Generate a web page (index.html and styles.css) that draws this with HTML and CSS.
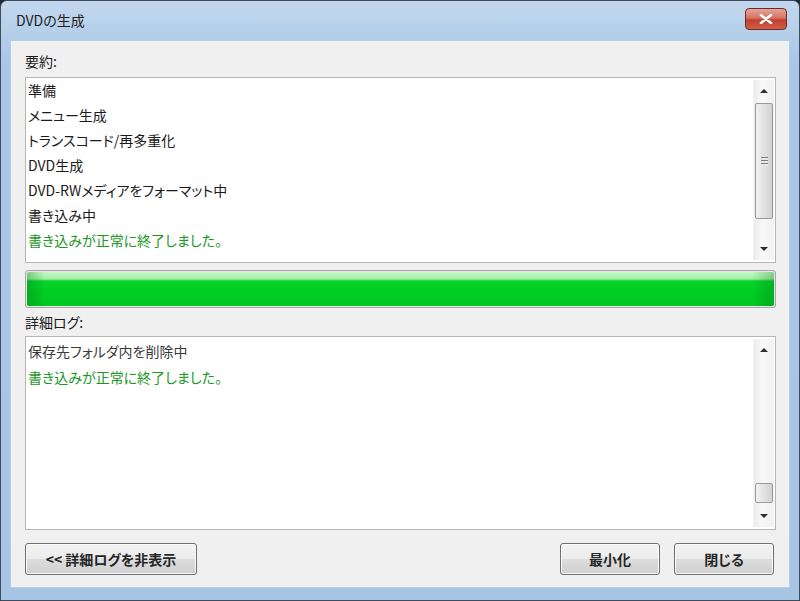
FILE: index.html
```html
<!DOCTYPE html>
<html lang="ja">
<head>
    <meta charset="UTF-8">
    <meta name="viewport" content="width=device-width, initial-scale=1.0">
    <title>DVDの生成</title>
    <link rel="stylesheet" href="styles.css">
</head>
<body>
    <div class="window">
        <div class="titlebar">
            <span class="title">DVDの生成</span>
            <button class="close" aria-label="閉じる">
                <svg width="14" height="10" viewBox="0 0 14 10">
                    <path d="M2 1 L12 9 M12 1 L2 9" stroke="#fff" stroke-width="2.6" stroke-linecap="round"/>
                </svg>
            </button>
        </div>
        <div class="client">
            <div class="label">要約:</div>
            <div class="listbox summary">
                <ul class="items">
                    <li>準備</li>
                    <li>メニュー生成</li>
                    <li>トランスコード/再多重化</li>
                    <li>DVD生成</li>
                    <li>DVD-RWメディアをフォーマット中</li>
                    <li>書き込み中</li>
                    <li class="ok">書き込みが正常に終了しました。</li>
                </ul>
                <div class="scrollbar">
                    <span class="arrow up"></span>
                    <div class="track">
                        <div class="thumb big"><span class="grip"></span></div>
                    </div>
                    <span class="arrow down"></span>
                </div>
            </div>

            <div class="progress">
                <div class="fill"></div>
            </div>

            <div class="label second">詳細ログ:</div>
            <div class="listbox detail">
                <ul class="items log">
                    <li class="muted">保存先フォルダ内を削除中</li>
                    <li class="ok">書き込みが正常に終了しました。</li>
                </ul>
                <div class="scrollbar">
                    <span class="arrow up"></span>
                    <div class="track end">
                        <div class="thumb small"></div>
                    </div>
                    <span class="arrow down"></span>
                </div>
            </div>

            <div class="buttons">
                <button class="btn wide">&lt;&lt; 詳細ログを非表示</button>
                <div class="spacer"></div>
                <button class="btn">最小化</button>
                <button class="btn">閉じる</button>
            </div>
        </div>
    </div>
</body>
</html>
```

FILE: styles.css
```css
body {
    margin: 0;
    padding: 0;
    background-color: #1d2a33;
    font-family: "Noto Sans CJK JP", "Noto Sans", sans-serif;
    font-feature-settings: "palt";
    color: #1a1a1a;
}
.window {
    box-sizing: border-box;
    width: 800px;
    height: 601px;
    border: 1px solid #3d4d5c;
    border-radius: 7px 7px 0 0;
    background: linear-gradient(#c3d8ee, #a9c7e6 60px, #a6c5e4);
    display: flex;
    flex-direction: column;
    padding: 0 9px 12px 9px;
}
.titlebar {
    height: 39px;
    display: flex;
    align-items: center;
    padding-left: 6px;
}
.title {
    font-size: 14px;
    color: #1e1e1e;
    margin-top: -1px;
}
.close {
    margin-left: auto;
    margin-right: 3px;
    margin-top: -3px;
    width: 42px;
    height: 22px;
    border: 1px solid #6b2c2a;
    border-radius: 4px;
    background: linear-gradient(#e6a497, #d67362 45%, #c2402c 55%, #d0604a);
    display: flex;
    align-items: center;
    justify-content: center;
    padding: 0;
}
.client {
    flex: 1;
    box-sizing: border-box;
    background-color: #f0f0f0;
    border: 1px solid #b9cde2;
    padding: 10px 13px 0 14px;
    display: flex;
    flex-direction: column;
}
.label {
    font-size: 14px;
    line-height: 20px;
    height: 20px;
    color: #1a1a1a;
    margin-bottom: 6px;
}
.label.second {
    margin-bottom: 4px;
}
.listbox {
    box-sizing: border-box;
    background-color: #fff;
    border: 1px solid #b5b5b5;
    display: flex;
    position: relative;
}
.summary {
    height: 186px;
    margin-bottom: 7px;
}
.detail {
    height: 194px;
    margin-bottom: 13px;
}
.items {
    list-style: none;
    margin: 0;
    padding: 0 0 0 2px;
    flex: 1;
    font-size: 14px;
    line-height: 25px;
}
.items.log {
    padding-top: 1px;
    line-height: 26px;
}
.ok {
    color: #20981f;
}
.muted {
    color: #3a3a3a;
}
.scrollbar {
    width: 20px;
    margin: 2px 1px 2px 0;
    background: linear-gradient(90deg, #ececec, #f8f8f8 40%, #f1f1f1);
    border-left: 1px solid #f4f4f4;
    display: flex;
    flex-direction: column;
}
.arrow {
    height: 22px;
    display: flex;
    align-items: center;
    justify-content: center;
}
.arrow::before {
    content: "";
    border-left: 4px solid transparent;
    border-right: 4px solid transparent;
}
.arrow.up::before {
    border-bottom: 4px solid #2e2e2e;
}
.arrow.down::before {
    border-top: 4px solid #2e2e2e;
}
.track {
    flex: 1;
    display: flex;
    flex-direction: column;
}
.track.end {
    justify-content: flex-end;
}
.thumb {
    box-sizing: border-box;
    margin: 0 1px;
    border: 1px solid #9a9a9a;
    border-radius: 2px;
    background: linear-gradient(90deg, #f1f1f1, #e2e2e2 50%, #d2d2d2);
    display: flex;
    align-items: center;
    justify-content: center;
}
.thumb.big {
    height: 116px;
    margin-top: 1px;
}
.thumb.small {
    height: 20px;
    margin-bottom: 2px;
}
.grip {
    width: 7px;
    height: 9px;
    background: repeating-linear-gradient(#7e7e7e 0 1px, #e8e8e8 1px 3px);
}
.progress {
    box-sizing: border-box;
    height: 38px;
    border: 1px solid #a8a8a8;
    border-radius: 3px;
    background-color: #e6e6e6;
    padding: 1px;
    margin-bottom: 4px;
}
.fill {
    height: 100%;
    border-radius: 2px;
    background:
        linear-gradient(90deg, rgba(0, 120, 20, 0.35), rgba(0, 120, 20, 0) 18px, rgba(0, 120, 20, 0) calc(100% - 22px), rgba(0, 110, 20, 0.3)),
        linear-gradient(#c8f7c8, #a4eea6 7px, #05d22a 9px, #00cc22 70%, #06c526);
}
.buttons {
    display: flex;
    gap: 14px;
    height: 32px;
    padding-right: 2px;
}
.spacer {
    flex: 1;
}
.btn {
    box-sizing: border-box;
    width: 100px;
    height: 32px;
    border: 1px solid #707070;
    border-radius: 3px;
    background: linear-gradient(#f3f3f3, #ebebeb 50%, #dddddd 51%, #cfcfcf);
    font-family: "Noto Sans CJK JP", "Noto Sans", sans-serif;
    font-feature-settings: "palt";
    font-size: 14px;
    font-weight: bold;
    color: #262626;
    padding: 0;
    box-shadow: inset 0 0 0 1px #fafafa;
}
.btn.wide {
    width: 172px;
}
```
